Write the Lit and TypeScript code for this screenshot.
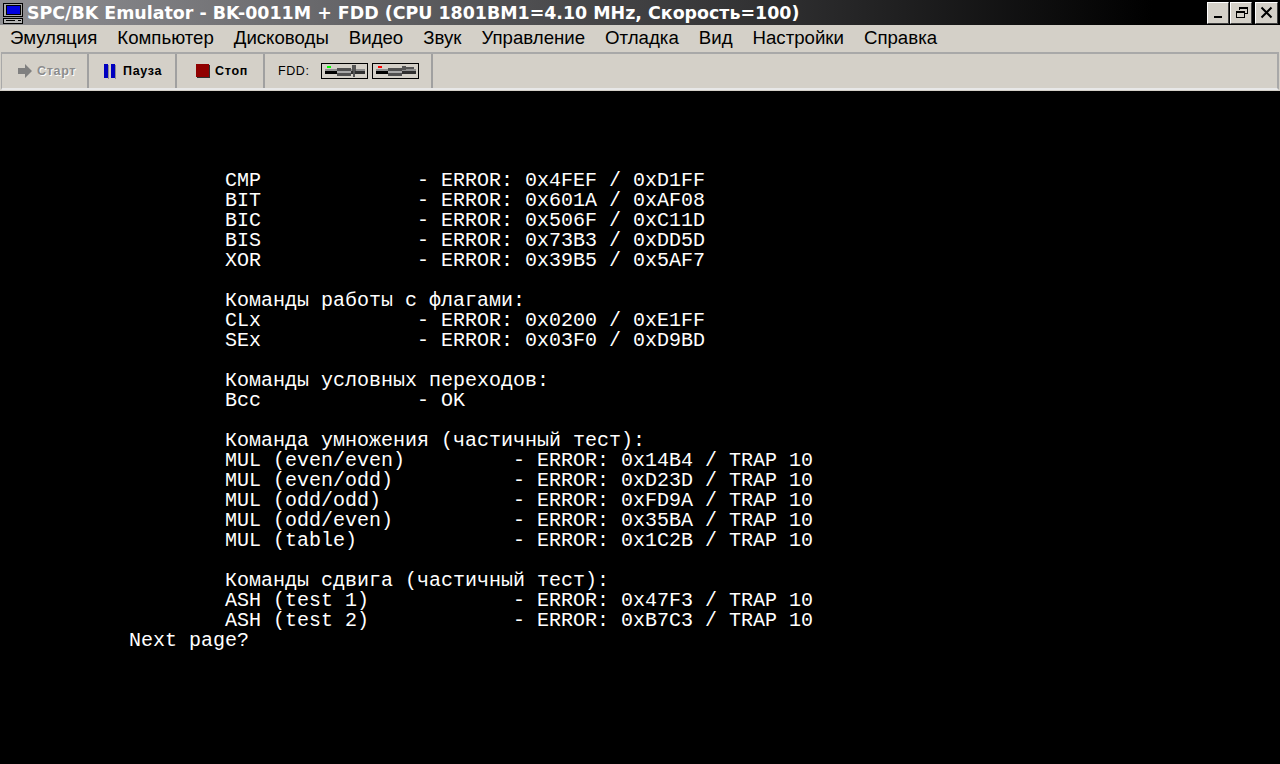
import { LitElement, html, css, svg } from "lit";
import { customElement } from "lit/decorators.js";

const MENU = ["Эмуляция", "Компьютер", "Дисководы", "Видео", "Звук", "Управление", "Отладка", "Вид", "Настройки", "Справка"];

const LINES: string[] = [
  "        CMP             - ERROR: 0x4FEF / 0xD1FF",
  "        BIT             - ERROR: 0x601A / 0xAF08",
  "        BIC             - ERROR: 0x506F / 0xC11D",
  "        BIS             - ERROR: 0x73B3 / 0xDD5D",
  "        XOR             - ERROR: 0x39B5 / 0x5AF7",
  "",
  "        Команды работы с флагами:",
  "        CLx             - ERROR: 0x0200 / 0xE1FF",
  "        SEx             - ERROR: 0x03F0 / 0xD9BD",
  "",
  "        Команды условных переходов:",
  "        Bcc             - OK",
  "",
  "        Команда умножения (частичный тест):",
  "        MUL (even/even)         - ERROR: 0x14B4 / TRAP 10",
  "        MUL (even/odd)          - ERROR: 0xD23D / TRAP 10",
  "        MUL (odd/odd)           - ERROR: 0xFD9A / TRAP 10",
  "        MUL (odd/even)          - ERROR: 0x35BA / TRAP 10",
  "        MUL (table)             - ERROR: 0x1C2B / TRAP 10",
  "",
  "        Команды сдвига (частичный тест):",
  "        ASH (test 1)            - ERROR: 0x47F3 / TRAP 10",
  "        ASH (test 2)            - ERROR: 0xB7C3 / TRAP 10",
  "Next page?",
];

const appIcon = svg`<svg class="appicon" width="24" height="24" viewBox="0 0 24 24" shape-rendering="crispEdges">
  <rect x="3" y="2" width="20" height="14" fill="#000"/>
  <rect x="4" y="3" width="18" height="12" fill="#a8a8a8"/>
  <rect x="6" y="4" width="15" height="10" fill="#000"/>
  <rect x="7" y="5" width="13" height="8" fill="#0000e0"/>
  <rect x="3" y="17" width="20" height="6" fill="#000"/>
  <rect x="4" y="18" width="18" height="4" fill="#b4b4b4"/>
  <rect x="6" y="19" width="9" height="1" fill="#000"/>
  <rect x="18" y="19" width="3" height="1" fill="#000"/>
</svg>`;

const fddBody = svg`
  <rect x="4" y="6" width="40" height="2" fill="#909090"/>
  <rect x="4" y="8" width="12" height="3" fill="#000"/>
  <rect x="30" y="8" width="14" height="3" fill="#303030"/>
  <rect x="16" y="5" width="14" height="8" fill="#505050"/>
  <rect x="16" y="8" width="14" height="2" fill="#a8a8a8"/>`;

@customElement("app-root")
export class AppRoot extends LitElement {
  static styles = css`
    :host { display: flex; flex-direction: column; width: 1280px; height: 764px; background: #000; overflow: hidden; font-family: "Liberation Sans", Arial, sans-serif; }
    .title { height: 25px; display: flex; align-items: center; background: linear-gradient(90deg, #909094 0%, #000 90%); flex: none; }
    .appicon { flex: none; display: block; }
    .title-text { margin-left: 3px; color: #fff; font: bold 17.43px "DejaVu Sans", Verdana, sans-serif; white-space: pre; flex: 1; }
    .winbtns { display: flex; align-items: center; gap: 1px; margin-right: 2px; }
    .winbtn { width: 22px; height: 22px; box-sizing: border-box; background: #d4d0c8; border: 1px solid; border-color: #fff #404040 #404040 #fff; display: flex; align-items: center; justify-content: center; }
    .winbtn.close { margin-left: 2px; width: 23px; }
    .menu { height: 26px; background: #d4d0c8; display: flex; align-items: center; gap: 20px; padding-left: 10px; color: #000; font-size: 18.65px; flex: none; }
    .toolbar { height: 40px; flex: none; background: #d4d0c8; box-sizing: border-box; padding: 1px 1px 0 1px; display: flex; }
    .tb-inner { flex: 1; display: flex; box-sizing: border-box; height: 38px; border-top: 2px solid #a8a8a8; border-bottom: 2px solid #e8e8e8; border-left: 1px solid #a8a8a8; border-right: 2px solid #a8a8a8; }
    .tb { display: flex; align-items: center; box-sizing: border-box; border-right: 2px solid #a0a0a0; font-size: 12.5px; font-weight: bold; letter-spacing: 0.7px; color: #000; height: 100%; flex: none; }
    .tb.start { width: 87px; padding-left: 15px; gap: 4px; color: #8c8c8c; text-shadow: 1px 1px 0 #fff; }
    .tb.pause { width: 88px; padding-left: 14px; gap: 6px; }
    .tb.stop { width: 88px; padding-left: 19px; gap: 5px; }
    .tb.fdd { width: 168px; padding-left: 13px; font-weight: normal; letter-spacing: 0.6px; }
    .fdd-label { width: 43px; flex: none; }
    .fdd-icon { display: block; margin-right: 4px; }
    .screen { flex: 1; background: #000; color: #fff; box-sizing: border-box; padding: 80px 0 0 129px; font-family: "Liberation Mono", "Courier New", monospace; font-size: 20px; line-height: 20px; white-space: pre; }
    .screen div { height: 20px; }
  `;

  render() {
    return html`
      <div class="title">
        ${appIcon}
        <span class="title-text">SPC/BK Emulator - BK-0011M + FDD (CPU 1801ВМ1=4.10 MHz, Скорость=100)</span>
        <div class="winbtns">
          <div class="winbtn"><svg width="15" height="15" viewBox="0 0 15 15" shape-rendering="crispEdges"><rect x="3" y="11" width="8" height="2" fill="#000"/></svg></div>
          <div class="winbtn"><svg width="15" height="15" viewBox="0 0 15 15" shape-rendering="crispEdges" fill="none" stroke="#000"><path d="M5.5 5v-2.5h8v6h-3"/><path d="M5.5 3.5h8"/><rect x="2.5" y="6.5" width="8" height="6"/><path d="M2.5 7.5h8"/></svg></div>
          <div class="winbtn close"><svg width="15" height="15" viewBox="0 0 15 15"><path d="M2.5 2.5l10 10M12.5 2.5l-10 10" stroke="#000" stroke-width="2" fill="none"/></svg></div>
        </div>
      </div>
      <div class="menu">${MENU.map((m) => html`<span>${m}</span>`)}</div>
      <div class="toolbar">
        <div class="tb-inner">
          <div class="tb start">
            <svg width="16" height="16" viewBox="0 0 16 16"><path d="M1 5h7V1l7 7-7 7v-4H1z" fill="#808080"/></svg>
            <span>Старт</span>
          </div>
          <div class="tb pause">
            <svg width="14" height="16" viewBox="0 0 14 16" shape-rendering="crispEdges"><rect x="1" y="1" width="4" height="14" fill="#0000c0"/><rect x="5" y="2" width="1" height="14" fill="#909090"/><rect x="8" y="1" width="4" height="14" fill="#0000c0"/><rect x="12" y="2" width="1" height="14" fill="#909090"/></svg>
            <span>Пауза</span>
          </div>
          <div class="tb stop">
            <svg width="14" height="14" viewBox="0 0 14 14" shape-rendering="crispEdges"><rect x="1" y="1" width="13" height="13" fill="#303030"/><rect width="13" height="13" fill="#900000"/></svg>
            <span>Стоп</span>
          </div>
          <div class="tb fdd">
            <span class="fdd-label">FDD:</span>
            <svg class="fdd-icon" width="47" height="16" viewBox="0 0 47 16" shape-rendering="crispEdges">
              <rect x="0.5" y="0.5" width="46" height="15" fill="#d4d0c8" stroke="#000"/>
              <rect x="6" y="3" width="4" height="2" fill="#00ff00"/>
              ${fddBody}
              <rect x="32" y="5" width="2" height="9" fill="#555"/>
              <rect x="31" y="2" width="4" height="6" fill="#555"/>
            </svg>
            <svg class="fdd-icon" width="47" height="16" viewBox="0 0 47 16" shape-rendering="crispEdges">
              <rect x="0.5" y="0.5" width="46" height="15" fill="#d4d0c8" stroke="#000"/>
              <rect x="6" y="3" width="4" height="2" fill="#ff0000"/>
              ${fddBody}
              <rect x="32" y="4" width="10" height="2" fill="#555"/>
              <rect x="30" y="3" width="4" height="4" fill="#555"/>
            </svg>
          </div>
        </div>
      </div>
      <div class="screen">${LINES.map((l) => html`<div>${l}</div>`)}</div>
    `;
  }
}
